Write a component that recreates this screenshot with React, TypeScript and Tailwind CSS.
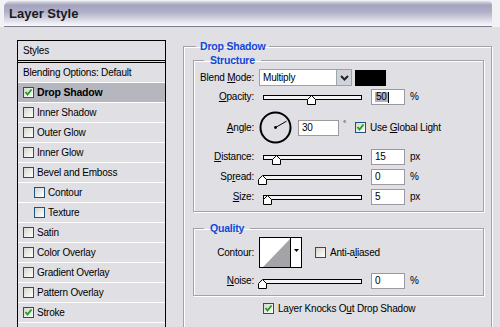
import React from 'react';

// checkbox in the XP style: dark blue frame, pale gradient, green tick
function CheckBox({ checked = false }: { checked?: boolean }) {
  return (
    <span className="flex h-[11px] w-[11px] shrink-0 items-center justify-center border border-[#1c5180] bg-gradient-to-br from-[#d6d6d0] to-white">
      {checked && (
        <svg width="9" height="9" viewBox="0 0 9 9">
          <path d="M1.5 4 L3.5 6.5 L7.5 1.5" stroke="#21a121" strokeWidth="2" fill="none" />
        </svg>
      )}
    </span>
  );
}

function StyleItem({
  label,
  checked,
  selected,
  sub,
  bold,
}: {
  label: string;
  checked?: boolean;
  selected?: boolean;
  sub?: boolean;
  bold?: boolean;
}) {
  return (
    <div
      className={`flex h-[20px] items-center gap-[3px] border-b border-white ${sub ? 'pl-[16px]' : 'pl-[5px]'} ${selected ? 'bg-[#b6b6be]' : ''}`}
    >
      <CheckBox checked={checked} />
      <span className={bold ? 'text-[10.5px] font-bold' : ''}>{label}</span>
    </div>
  );
}

// thumb is a small "house" shape sitting on the track
function Slider({ thumb }: { thumb: string }) {
  return (
    <div className="relative h-[16px] w-[107px] shrink-0">
      <div className="ml-[4px] mt-[6px] h-[5px] w-[99px] border border-black bg-[#f4f4f4]" />
      <svg className={`absolute top-[6px] ${thumb}`} width="10" height="10" viewBox="0 0 10 10">
        <path d="M4.5 0.5 L8.5 4.5 L8.5 9.5 L0.5 9.5 L0.5 4.5 Z" fill="#fff" stroke="#000" />
      </svg>
    </div>
  );
}

function Field({ children, wide }: { children: React.ReactNode; wide?: boolean }) {
  return (
    <div
      className={`flex h-[16px] shrink-0 items-center border border-[#9a9aa0] bg-white pl-[3px] ${wide ? 'w-[41px]' : 'w-[34px]'}`}
    >
      {children}
    </div>
  );
}

function Row({ label, children, className = '' }: { label: React.ReactNode; children: React.ReactNode; className?: string }) {
  return (
    <div className={`flex items-center ${className}`}>
      <div className="w-[60px] shrink-0 text-right">{label}</div>
      <div className="ml-[5px] flex items-center">{children}</div>
    </div>
  );
}

function SliderRow({ label, thumb, value, unit }: { label: React.ReactNode; thumb: string; value: React.ReactNode; unit: string }) {
  return (
    <Row label={label} className="h-[16px]">
      <Slider thumb={thumb} />
      <div className="ml-[5px]">
        <Field>{value}</Field>
      </div>
      <span className="ml-[5px]">{unit}</span>
    </Row>
  );
}

const U = ({ children }: { children: React.ReactNode }) => <span className="underline underline-offset-1">{children}</span>;

const legend = 'text-[10.5px] font-bold leading-[14px] text-[#1048d8]';
const etched = 'border border-[#a2a2a8] shadow-[1px_1px_0_#fff,inset_1px_1px_0_#fff]';

export default function App() {
  return (
    <div className="h-[327px] w-[500px] overflow-hidden bg-[#dfdfe4] font-['Liberation_Sans',Arial,sans-serif] text-[10px] leading-none tracking-[-0.2px] text-black">
      {/* title bar */}
      <div className="h-[27px] bg-[#f2f2f4] pl-[4px] pr-[8px] pt-[1px]">
        <div className="flex h-[26px] items-center rounded-tl-[6px] rounded-tr-[4px] border-b border-[#7c7c8e] bg-[linear-gradient(to_bottom,#dedee6_0px,#a4a4be_4px,#b0b0c8_11px,#fbfbfd_25px)] pl-[5px]">
          <span className="text-[13px] font-bold tracking-normal text-[#1a1a22]">Layer Style</span>
        </div>
      </div>

      <div className="flex gap-[17px] pl-[17px] pt-[12px]">
        {/* styles list */}
        <div className="mt-[1px] h-[320px] w-[149px] shrink-0 border border-black">
          <div className="flex h-[20px] items-center border-b border-black pl-[5px]">Styles</div>
          <div className="h-[1px]" />
          <div className="flex h-[21px] items-center border-b border-t border-b-white border-t-black pl-[5px]">
            Blending Options: Default
          </div>
          <StyleItem label="Drop Shadow" checked selected bold />
          <StyleItem label="Inner Shadow" />
          <StyleItem label="Outer Glow" />
          <StyleItem label="Inner Glow" />
          <StyleItem label="Bevel and Emboss" />
          <StyleItem label="Contour" sub />
          <StyleItem label="Texture" sub />
          <StyleItem label="Satin" />
          <StyleItem label="Color Overlay" />
          <StyleItem label="Gradient Overlay" />
          <StyleItem label="Pattern Overlay" />
          <StyleItem label="Stroke" checked />
        </div>

        {/* drop shadow settings */}
        <fieldset className={`w-[309px] shrink-0 pb-[40px] pl-[9px] ${etched}`}>
          <legend className={`ml-[3px] px-[4px] ${legend}`}>Drop Shadow</legend>

          <fieldset className={`w-[291px] pb-[6px] ${etched}`}>
            <legend className={`ml-[10px] px-[6px] ${legend}`}>Structure</legend>

            <Row label={<>Blend <U>M</U>ode:</>} className="mt-[2px] h-[17px]">
              <div className="flex h-[17px] w-[93px] items-center border border-[#8ea4bf] bg-white">
                <span className="flex-1 pl-[3px]">Multiply</span>
                <span className="flex h-[15px] w-[15px] items-center justify-center border-l border-[#9aa] bg-[#d2d2da]">
                  <svg width="9" height="6" viewBox="0 0 9 6">
                    <path d="M1 1 L4.5 4.5 L8 1" stroke="#222" strokeWidth="2" fill="none" />
                  </svg>
                </span>
              </div>
              <div className="ml-[3px] h-[16px] w-[31px] bg-black" />
            </Row>

            <Row label={<><U>O</U>pacity:</>} className="mt-[3px] h-[16px]">
              <Slider thumb="left-[48px]" />
              <div className="ml-[5px]">
                <Field>
                  <span className="bg-[#b0b0bc] px-[1px]">50</span>
                  <span className="h-[11px] w-[1px] bg-black" />
                </Field>
              </div>
              <span className="ml-[5px]">%</span>
            </Row>

            <Row label={<><U>A</U>ngle:</>} className="mt-[6px] h-[33px]">
              <svg width="33" height="33" viewBox="0 0 33 33">
                <circle cx="16.5" cy="16.5" r="15" stroke="#000" strokeWidth="2" fill="none" />
                <circle cx="16.5" cy="16.5" r="1.4" fill="#000" />
                <path d="M16.5 16.5 L27.5 10.2" stroke="#000" strokeWidth="1" />
              </svg>
              <div className="ml-[6px]">
                <Field wide>30</Field>
              </div>
              <span className="ml-[4px] self-start pt-[9px] text-[8px]">°</span>
              <div className="ml-[9px] flex items-center gap-[4px]">
                <CheckBox checked />
                <span>
                  Use <U>G</U>lobal Light
                </span>
              </div>
            </Row>

            <div className="mt-[5px] flex flex-col gap-[4px]">
              <SliderRow label={<><U>D</U>istance:</>} thumb="left-[13px]" value="15" unit="px" />
              <SliderRow label={<>Sp<U>r</U>ead:</>} thumb="left-[-1px]" value="0" unit="%" />
              <SliderRow label={<><U>S</U>ize:</>} thumb="left-[4px]" value="5" unit="px" />
            </div>
          </fieldset>

          <fieldset className={`mt-[9px] w-[291px] pb-[6px] ${etched}`}>
            <legend className={`ml-[10px] px-[6px] ${legend}`}>Quality</legend>

            <Row label="Contour:" className="mt-[2px] h-[31px]">
              <div className="flex h-[31px] w-[43px] border border-black bg-white">
                <svg width="30" height="29" viewBox="0 0 30 29">
                  <polygon points="3,29 30,1 30,29" fill="#a4a4a8" />
                </svg>
                <div className="flex w-[11px] justify-center border-l border-black pt-[11px]">
                  <svg width="5" height="4" viewBox="0 0 5 4">
                    <polygon points="0,0 5,0 2.5,3" fill="#000" />
                  </svg>
                </div>
              </div>
              <div className="ml-[13px] flex items-center gap-[4px]">
                <CheckBox />
                <span>
                  Anti-a<U>l</U>iased
                </span>
              </div>
            </Row>

            <div className="mt-[5px]">
              <SliderRow label={<><U>N</U>oise:</>} thumb="left-[-1px]" value="0" unit="%" />
            </div>
          </fieldset>

          <div className="ml-[70px] mt-[7px] flex items-center gap-[4px]">
            <CheckBox checked />
            <span>
              Layer Knocks O<U>u</U>t Drop Shadow
            </span>
          </div>
        </fieldset>
      </div>
    </div>
  );
}
